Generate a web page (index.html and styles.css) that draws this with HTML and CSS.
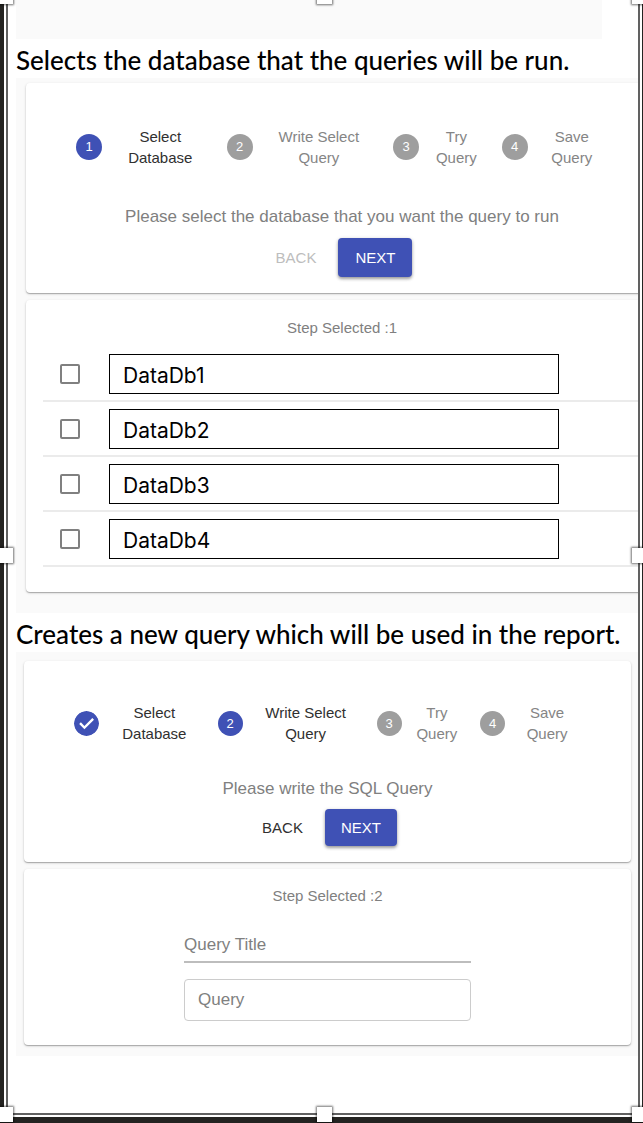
FILE: index.html
```html
<!DOCTYPE html>
<html lang="en">
<head>
<meta charset="utf-8">
<meta name="viewport" content="width=device-width, initial-scale=1">
<title>Query wizard</title>
<link rel="stylesheet" href="styles.css">
</head>
<body>
<div class="page">
  <main class="frame">
    <div class="strip"></div>

    <h2 class="caption">Selects the database that the queries will be run.</h2>
    <section class="panel panel-wide">
      <div class="card card-steps">
        <ol class="stepper">
          <li class="step step-a active"><span class="dot">1</span><span class="step-label">Select<br>Database</span></li>
          <li class="step step-b"><span class="dot">2</span><span class="step-label">Write Select<br>Query</span></li>
          <li class="step step-c"><span class="dot">3</span><span class="step-label">Try<br>Query</span></li>
          <li class="step step-d"><span class="dot">4</span><span class="step-label">Save<br>Query</span></li>
        </ol>
        <p class="prompt">Please select the database that you want the query to run</p>
        <div class="actions">
          <button class="btn" type="button" disabled>BACK</button>
          <button class="btn btn-primary" type="button">NEXT</button>
        </div>
      </div>
      <div class="card card-body">
        <p class="selected">Step Selected :1</p>
        <ul class="db-list">
          <li class="db-row"><input class="check" type="checkbox" id="db1"><label class="db-name" for="db1">DataDb1</label></li>
          <li class="db-row"><input class="check" type="checkbox" id="db2"><label class="db-name" for="db2">DataDb2</label></li>
          <li class="db-row"><input class="check" type="checkbox" id="db3"><label class="db-name" for="db3">DataDb3</label></li>
          <li class="db-row"><input class="check" type="checkbox" id="db4"><label class="db-name" for="db4">DataDb4</label></li>
        </ul>
      </div>
    </section>

    <h2 class="caption">Creates a new query which will be used in the report.</h2>
    <section class="panel panel-compact">
      <div class="card card-steps">
        <ol class="stepper">
          <li class="step step-a active"><svg class="done" viewBox="0 0 24 24" role="img" aria-label="Completed"><path d="M12 0a12 12 0 1 0 0 24 12 12 0 0 0 0-24zm-2 17.500l-5-5 1.600-1.600L10 14.300l7.600-7.600L19.200 8.300z"/></svg><span class="step-label">Select<br>Database</span></li>
          <li class="step step-b active"><span class="dot">2</span><span class="step-label">Write Select<br>Query</span></li>
          <li class="step step-c"><span class="dot">3</span><span class="step-label">Try<br>Query</span></li>
          <li class="step step-d"><span class="dot">4</span><span class="step-label">Save<br>Query</span></li>
        </ol>
        <p class="prompt">Please write the SQL Query</p>
        <div class="actions">
          <button class="btn" type="button">BACK</button>
          <button class="btn btn-primary" type="button">NEXT</button>
        </div>
      </div>
      <div class="card card-body">
        <p class="selected">Step Selected :2</p>
        <form class="fields">
          <input class="title-field" type="text" placeholder="Query Title" aria-label="Query Title">
          <textarea class="query-field" rows="1" placeholder="Query" aria-label="Query"></textarea>
        </form>
      </div>
    </section>
  </main>
  <i class="handle top left"></i>
  <i class="handle top center"></i>
  <i class="handle top right"></i>
  <i class="handle middle left"></i>
  <i class="handle middle right"></i>
  <i class="handle bottom left"></i>
  <i class="handle bottom center"></i>
  <i class="handle bottom right"></i>
</div>
</body>
</html>
```
FILE: styles.css
```css
* { box-sizing: border-box; }

body {
  margin: 0;
  font-family: "Liberation Sans", Arial, sans-serif;
  color: #808080;
}

h2, p, ul, ol { margin: 0; padding: 0; }
ul, ol { list-style: none; }

/* Selected frame: dark surround, white line, grey line */
.page {
  position: relative;
  display: flex;
  min-height: 100vh;
  padding: 0 1px 6px 4px;
  background: #242321;
  overflow: hidden;
}

.frame {
  flex: 1;
  min-width: 0;
  padding-left: 8px;
  background: #fff;
  border: 2px solid #616161;
  border-top: 0;
  outline: 2px solid #fff;
  margin: 0 2px 2px 2px;
}

.strip {
  height: 39px;
  margin-right: 36px;
  background: #fafafa;
}

.caption {
  height: 39px;
  font: 500 26px/42px Lato, Carlito, Calibri, sans-serif;
  color: #000;
  white-space: nowrap;
}

/* Panels */
.panel {
  display: flex;
  flex-direction: column;
  gap: 7px;
  background: #fafafa;
  overflow: hidden;
}

.panel-wide { padding: 5px 0 21px 10px; }
.panel-wide .card { margin-right: -20px; }
.panel-compact { padding: 9px 7px 11px 8px; }

.card {
  background: #fff;
  border-radius: 4px;
  box-shadow: 0 1px 1px rgba(0, 0, 0, .24), 0 1px 3px rgba(0, 0, 0, .16);
}

.card-steps { padding: 43px 0 16px; }
.card-body { padding: 18px 0 25px; }

/* Stepper */
.stepper {
  display: flex;
  gap: 8px;
  padding: 0 42px 0 50px;
}

.step {
  display: flex;
  align-items: center;
  min-width: 0;
}

.step-a { flex: 142 1 0; }
.step-b { flex: 158 1 0; }
.step-c { flex: 100 1 0; }
.step-d { flex: 114 1 0; }

.dot, .done {
  flex: none;
  width: 26px;
  height: 26px;
  border-radius: 50%;
}

.dot {
  background: #9e9e9e;
  color: #fff;
  font-size: 13px;
  line-height: 26px;
  text-align: center;
}

.active .dot { background: #3f51b5; }
.done { fill: #3f51b5; }

.step-label {
  flex: 1;
  font-size: 15px;
  line-height: 21px;
  text-align: center;
  color: #858585;
}

.active .step-label { color: #303030; }

.prompt {
  margin-top: 37px;
  font-size: 17px;
  line-height: 24px;
  text-align: center;
}

.actions {
  display: flex;
  justify-content: center;
  gap: 14px;
  margin-top: 9px;
  padding-right: 4px;
}

.btn {
  height: 39px;
  padding: 0 8px;
  border: 0;
  border-radius: 4px;
  background: none;
  font: 15px/39px "Liberation Sans", Arial, sans-serif;
  color: #303030;
}

.btn:disabled { color: #bdbdbd; }

.btn-primary {
  padding: 0 17px;
  background: #3f51b5;
  color: #fff;
  box-shadow: 0 2px 3px rgba(0, 0, 0, .3), 0 1px 4px rgba(0, 0, 0, .16);
}

.selected {
  font-size: 15px;
  line-height: 20px;
  text-align: center;
}

/* Database list */
.db-list {
  margin-top: 9px;
  padding-left: 17px;
}

.db-row {
  display: flex;
  align-items: center;
  height: 55px;
  padding-left: 17px;
  border-bottom: 2px solid #ebebeb;
}

.check {
  appearance: none;
  flex: none;
  width: 20px;
  height: 20px;
  margin: 0 29px 0 0;
  border: 2px solid #808080;
  border-radius: 2px;
}

.db-name {
  flex: 0 1 450px;
  height: 40px;
  padding: 2px 13px 0;
  border: 1px solid #000;
  font: 21px/38px Inter, sans-serif;
  color: #000;
}

/* Form fields */
.fields {
  display: flex;
  flex-direction: column;
  gap: 16px;
  max-width: 287px;
  margin: 23px auto 0;
}

.title-field, .query-field {
  width: 100%;
  margin: 0;
  background: none;
  font: 17px/20px "Liberation Sans", Arial, sans-serif;
  color: #303030;
  outline: 0;
}

.title-field {
  height: 34px;
  padding: 0;
  border: 0;
  border-bottom: 2px solid #bdbdbd;
}

.query-field {
  height: 42px;
  padding: 10px 13px;
  border: 1px solid #ccc;
  border-radius: 4px;
  resize: none;
  overflow: hidden;
}

::placeholder { color: #808080; opacity: 1; }

/* Tighter sizing of the second wizard */
.panel-compact .card-steps { padding-top: 41px; }
.panel-compact .card-body { padding: 17px 0 24px; }
.panel-compact .dot, .panel-compact .done { width: 25px; height: 25px; line-height: 25px; }
.panel-compact .prompt { margin-top: 33px; }
.panel-compact .actions { margin-top: 8px; }
.panel-compact .btn { height: 37px; line-height: 37px; }
.panel-compact .btn-primary { padding: 0 16px; }

/* Resize handles over the frame edges */
.handle {
  position: absolute;
  width: 15px;
  height: 15px;
  background: #fff;
  box-shadow: 0 0 2px 1px rgba(0, 0, 0, .55);
}

.top { top: -11px; }
.middle { top: 548px; }
.bottom { bottom: 1px; }
.left { left: -2px; }
.center { left: calc(50% - 5px); }
.right { right: -4px; }
```
